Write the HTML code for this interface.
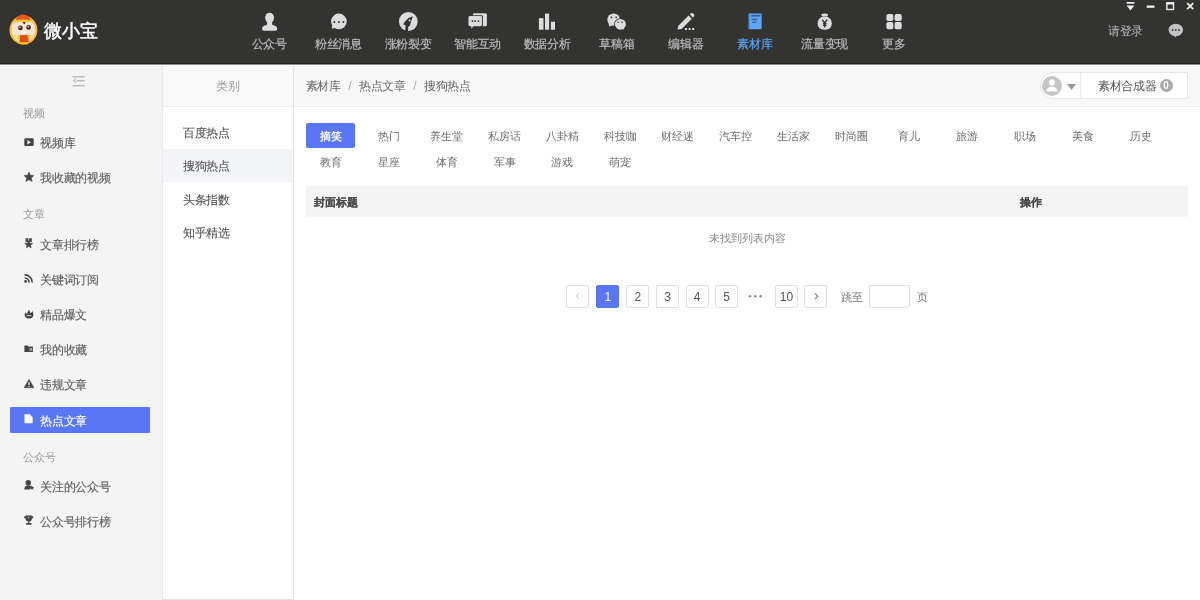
<!DOCTYPE html>
<html><head><meta charset="utf-8">
<style>
*{margin:0;padding:0;box-sizing:border-box}
html,body{width:1200px;height:600px;overflow:hidden;background:#fff;font-family:"Liberation Sans",sans-serif;font-size:12px;color:#555}
.a{position:absolute}
#hdr{left:0;top:0;width:1200px;height:64px;background:#333332;border-bottom:1px solid #222}
.nt{line-height:12px;font-size:12px;text-align:center;letter-spacing:-0.3px;white-space:nowrap;-webkit-text-stroke:0.2px currentColor}
.tg{width:60px;text-align:center;font-size:11px;line-height:11px;white-space:nowrap}
#side{left:0;top:66px;width:162px;height:534px;background:#f4f4f4}
.sl{position:absolute;left:23px;font-size:11px;line-height:11px;color:#999}
.si{position:absolute;left:40px;font-size:12px;line-height:12px;color:#606060;letter-spacing:-0.2px;-webkit-text-stroke:0.15px currentColor}
.ic{position:absolute;left:24px}
#cat{left:162px;top:66px;width:132px;height:534px;background:#fff;border-left:1px solid #e8e8e8;border-right:1px solid #e4e4e4;border-bottom:1px solid #e4e4e4}
#cathd{left:0;top:0;width:130px;height:41px;background:#f9f9f9;border-bottom:1px solid #ececec}
.ci{position:absolute;left:20px;font-size:12px;line-height:12px;color:#555;letter-spacing:-0.3px;-webkit-text-stroke:0.1px currentColor}
#bc{left:294px;top:66px;width:906px;height:41px;background:#f8f8f8;border-bottom:1px solid #ececec}
.tag{position:absolute;width:49px;height:24px;line-height:24px;text-align:center;font-size:11px;color:#666}
.tag.on{background:#5876f5;color:#fff;border-radius:2px}
.pg{position:absolute;top:285px;width:23px;height:23px;border:1px solid #e0e0e0;border-radius:2px;text-align:center;line-height:22px;font-size:12px;color:#555;background:#fff}
.pg.on{background:#5876f5;border-color:#5876f5;color:#fff}
</style></head><body><div id="wrap" style="will-change:transform;position:absolute;left:0;top:0;width:1200px;height:600px;overflow:hidden">

<!-- HEADER -->
<div id="hdr" class="a">
  <!-- logo -->
  <svg class="a" style="left:6px;top:12px" width="36" height="36" viewBox="0 0 36 36">
    <ellipse cx="17.4" cy="18" rx="14.8" ry="15.4" fill="#3a2a10"/>
    <ellipse cx="17.4" cy="18" rx="14" ry="14.6" fill="#f0bf3a"/>
    <ellipse cx="17.4" cy="18.4" rx="12" ry="12.6" fill="#f7dc96"/>
    <path d="M9.5 9.5 Q10.5 2.6 17 2.6 Q23.8 2.6 25 9.2 Z" fill="#e8561a"/>
    <path d="M8.6 8.6 Q17 6.6 25.6 8.4 L25.2 10.6 Q17 9 8.8 10.8 Z" fill="#f5c43a"/>
    <path d="M6 13 Q7 9.5 12 10.5 L24 10 Q29 10.5 28.6 15 L29 21 Q27 23.5 23 22.8 L12 23 Q6.5 23 6.2 19.5 Z" fill="#f6e3d2"/>
    <path d="M16.4 10.4 Q18 9.6 19.8 10.8 L18.4 12.2 Z" fill="#3a2010"/>
    <circle cx="14.4" cy="15.9" r="2.3" fill="#5a1a28"/>
    <circle cx="22.6" cy="15.4" r="2.3" fill="#5a1a28"/>
    <circle cx="14" cy="15.3" r="0.7" fill="#fff"/>
    <circle cx="22.2" cy="14.8" r="0.7" fill="#fff"/>
    <path d="M16.6 19.6 L20 19.6 L19.4 21.6 L17.2 21.6 Z" fill="#fff"/>
    <path d="M13.6 23.2 L22.4 23 L22.6 30.2 L13.8 30.4 Z" fill="#e64a12"/>
    <path d="M14.6 30.2 L22.2 30 L21.8 32.6 L15 32.6 Z" fill="#f3c21c"/>
    <circle cx="12.6" cy="25.8" r="1.6" fill="#c8d83a"/>
    <circle cx="23" cy="24" r="1.6" fill="#c8d83a"/>
  </svg>
  <div class="a" style="left:44px;top:21.5px;font-size:18px;line-height:18px;color:#fff;-webkit-text-stroke:0.5px #fff">微小宝</div>

  <svg class="a" style="left:255px;top:8px" width="30" height="26" viewBox="0 0 30 26"><ellipse cx="14.6" cy="9.8" rx="4.5" ry="5.1" fill="#dcdcdc"/><path d="M12.3 13.5 L16.9 13.5 L17.4 16.9 Q21.9 17.6 22.3 20.4 Q22.5 22.8 20.3 22.8 L9 22.8 Q6.8 22.8 7 20.4 Q7.4 17.6 11.8 16.9 Z" fill="#dcdcdc"/></svg>
<div class="a nt" style="left:229.2px;top:38px;width:80px;color:#bababa">公众号</div>
<svg class="a" style="left:325px;top:8px" width="30" height="26" viewBox="0 0 30 26"><circle cx="13.9" cy="13.4" r="7.8" fill="#dcdcdc"/><path d="M7.5 15.5 L6.8 20.8 L12 19.5 Z" fill="#dcdcdc"/><circle cx="9.4" cy="13.9" r="1" fill="#323232"/><circle cx="13.9" cy="13.9" r="1" fill="#323232"/><circle cx="18.4" cy="13.9" r="1" fill="#323232"/></svg>
<div class="a nt" style="left:298.3px;top:38px;width:80px;color:#bababa">粉丝消息</div>
<svg class="a" style="left:393px;top:8px" width="30" height="26" viewBox="0 0 30 26"><circle cx="15.3" cy="13.5" r="9.4" fill="#dcdcdc"/><path d="M19.8 8.2 L15.4 10 L11.2 14.6 L10.2 16.4 L12.6 17.2 L12.2 23.6 L15 23.6 L15.2 19 L17 17.6 L18.2 13.2 Z" fill="#323232"/><circle cx="16.6" cy="12.4" r="1" fill="#dcdcdc"/></svg>
<div class="a nt" style="left:368.0px;top:38px;width:80px;color:#bababa">涨粉裂变</div>
<svg class="a" style="left:462px;top:8px" width="30" height="26" viewBox="0 0 30 26"><rect x="10.8" y="5.2" width="14.1" height="13" rx="1.5" fill="#dcdcdc"/><path d="M8 7.3 L19.6 7.3 Q20.9 7.3 20.9 8.6 L20.9 17.2 Q20.9 19.2 19 19.2 L11.5 19.2 L8.8 21.6 L8.8 19.2 L7.8 19.2 Q5.8 19.2 5.8 17.4 L5.8 9.2 Q5.8 7.3 8 7.3 Z" fill="#323232"/><path d="M8 8 L18.8 8 Q19.9 8 19.9 9.2 L19.9 16.6 Q19.9 18.2 18.4 18.2 L11.3 18.2 L9.3 20.8 L9.3 18.2 L8 18.2 Q6.5 18.2 6.5 16.6 L6.5 9.4 Q6.5 8 8 8 Z" fill="#dcdcdc"/><rect x="9.7" y="12.3" width="1.5" height="1.6" fill="#323232"/><rect x="12.5" y="12.3" width="1.5" height="1.6" fill="#323232"/><rect x="15.7" y="12.3" width="1.5" height="1.6" fill="#323232"/></svg>
<div class="a nt" style="left:437.6px;top:38px;width:80px;color:#bababa">智能互动</div>
<svg class="a" style="left:532px;top:8px" width="30" height="26" viewBox="0 0 30 26"><rect x="6.9" y="10.2" width="4.6" height="11.5" fill="#dcdcdc"/><rect x="13" y="5.6" width="4.1" height="16.1" fill="#dcdcdc"/><rect x="18.9" y="13.7" width="4.1" height="8" fill="#dcdcdc"/></svg>
<div class="a nt" style="left:507.0px;top:38px;width:80px;color:#bababa">数据分析</div>
<svg class="a" style="left:601px;top:8px" width="30" height="26" viewBox="0 0 30 26"><ellipse cx="12.7" cy="11.6" rx="6.4" ry="6.2" fill="#dcdcdc"/><path d="M7.5 15 L8.3 18.8 L11.5 17 Z" fill="#dcdcdc"/><ellipse cx="19.4" cy="16.35" rx="6.3" ry="6.1" fill="#323232"/><ellipse cx="19.4" cy="16.35" rx="5.5" ry="5.3" fill="#dcdcdc"/><path d="M21 20.5 L23 21.8 L22.8 19 Z" fill="#dcdcdc"/><circle cx="10.4" cy="9.3" r="0.9" fill="#323232"/><circle cx="15.2" cy="9.3" r="0.9" fill="#323232"/><circle cx="17.1" cy="14.3" r="0.8" fill="#323232"/><circle cx="21" cy="14.3" r="0.8" fill="#323232"/></svg>
<div class="a nt" style="left:576.8px;top:38px;width:80px;color:#bababa">草稿箱</div>
<svg class="a" style="left:671px;top:8px" width="30" height="26" viewBox="0 0 30 26"><path d="M6.4 21.6 L7.4 17.8 L17.6 7.6 L20.8 10.8 L10.6 21 Z" fill="#dcdcdc"/><path d="M18.8 6.4 L19.6 5.6 Q21 4.2 22.4 5.6 L22.8 6 Q24.2 7.4 22.8 8.8 L22 9.6 Z" fill="#dcdcdc"/><rect x="14" y="20" width="2" height="2" fill="#dcdcdc"/><rect x="17.6" y="20" width="2" height="2" fill="#dcdcdc"/><rect x="21.1" y="20" width="2" height="2" fill="#dcdcdc"/></svg>
<div class="a nt" style="left:645.8px;top:38px;width:80px;color:#bababa">编辑器</div>
<svg class="a" style="left:740px;top:8px" width="30" height="26" viewBox="0 0 30 26"><rect x="8.7" y="5.6" width="13" height="15.6" rx="0.8" fill="#5ea8f6"/><rect x="11.2" y="7" width="9.2" height="1.6" fill="#2c5c9c"/><rect x="11.7" y="10.8" width="5.6" height="1.4" fill="#2c5c9c"/><rect x="12.2" y="13.6" width="4" height="1.3" fill="#2c5c9c"/><rect x="8.7" y="5.6" width="1.2" height="15.6" fill="#4a90e0"/></svg>
<div class="a nt" style="left:715.0px;top:38px;width:80px;color:#5aa2f0">素材库</div>
<svg class="a" style="left:810px;top:8px" width="30" height="26" viewBox="0 0 30 26"><path d="M11.6 6 Q14.7 5.2 17.8 6 Q18.6 7.2 17.2 8.2 L12.2 8.2 Q10.8 7.2 11.6 6 Z" fill="#dcdcdc"/><path d="M12.6 8.6 L16.8 8.6 Q21.8 10.6 21.8 15.6 Q21.8 21.8 14.7 21.8 Q7.6 21.8 7.6 15.6 Q7.6 10.6 12.6 8.6 Z" fill="#dcdcdc"/><path d="M12.2 11.6 L14.7 15 L17.2 11.6 M14.7 15 L14.7 19.4 M12.9 15.6 L16.5 15.6 M12.9 17.4 L16.5 17.4" stroke="#323232" stroke-width="1.4" fill="none"/></svg>
<div class="a nt" style="left:784.6px;top:38px;width:80px;color:#bababa">流量变现</div>
<svg class="a" style="left:879px;top:8px" width="30" height="26" viewBox="0 0 30 26"><rect x="7.4" y="6.1" width="6.9" height="6.9" rx="1.8" fill="#dcdcdc"/><rect x="15.6" y="6.1" width="7.1" height="6.9" rx="1.8" fill="#dcdcdc"/><rect x="7.4" y="13.9" width="6.9" height="7.4" rx="1.8" fill="#dcdcdc"/><rect x="15.6" y="13.9" width="7.1" height="7.4" rx="1.8" fill="#dcdcdc"/></svg>
<div class="a nt" style="left:853.8px;top:38px;width:80px;color:#bababa">更多</div>

  <!-- window controls -->
  <svg class="a" style="left:1126px;top:2px" width="10" height="10" viewBox="0 0 10 10"><rect x="0.6" y="0" width="7.8" height="1.7" fill="#eee"/><path d="M0.6 3.6 L8.4 3.6 L4.5 8.6 Z" fill="#eee"/></svg>
  <svg class="a" style="left:1146px;top:5px" width="10" height="4" viewBox="0 0 10 4"><rect x="0.7" y="0.5" width="7.8" height="2.3" fill="#eee"/></svg>
  <svg class="a" style="left:1166px;top:2px" width="9" height="9" viewBox="0 0 9 9"><rect x="0.9" y="0.9" width="6.6" height="6.6" fill="none" stroke="#eee" stroke-width="1.4"/><rect x="0.3" y="0.3" width="7.8" height="2.2" fill="#eee"/></svg>
  <svg class="a" style="left:1186px;top:2px" width="9" height="9" viewBox="0 0 9 9"><path d="M1.2 1.2 L7.2 7.2 M7.2 1.2 L1.2 7.2" stroke="#eee" stroke-width="1.8"/></svg>

  <div class="a" style="left:1108px;top:25px;font-size:12px;line-height:12px;color:#bbb;letter-spacing:-0.3px">请登录</div>
  <svg class="a" style="left:1168px;top:23px" width="16" height="16" viewBox="0 0 16 16">
    <ellipse cx="7.8" cy="7" rx="7.2" ry="6.2" fill="#c4c4c4"/>
    <path d="M5 11 L7.5 14.5 L9 11 Z" fill="#c4c4c4"/>
    <circle cx="4.6" cy="7" r="0.9" fill="#333"/><circle cx="7.8" cy="7" r="0.9" fill="#333"/><circle cx="11" cy="7" r="0.9" fill="#333"/>
  </svg>
</div>

<div id="hline" class="a" style="left:0;top:64px;width:1200px;height:1px;background:#8a8a8a"></div>
<!-- SIDEBAR -->
<div id="side" class="a"></div>
<svg class="a" style="left:72px;top:75px" width="14" height="13" viewBox="0 0 14 13"><path d="M0.4 1.8 H12.7 M4.6 5.8 H12.7 M0.4 10.75 H12.7" stroke="#bdbdbd" stroke-width="1.4"/><path d="M3.8 4 L1.6 5.8 L3.8 7.6" stroke="#bdbdbd" stroke-width="1.3" fill="none"/></svg>
<div class="sl" style="top:108.3px">视频</div>
<div class="sl" style="top:209.3px">文章</div>
<div class="sl" style="top:451.7px">公众号</div>
<div class="a" style="left:10px;top:406.5px;width:140px;height:26.5px;background:#5876f5;border-radius:1px"></div>
<div class="si" style="top:137.3px;color:#606060">视频库</div>
<div class="si" style="top:172.4px;color:#606060">我收藏的视频</div>
<div class="si" style="top:238.5px;color:#606060">文章排行榜</div>
<div class="si" style="top:273.5px;color:#606060">关键词订阅</div>
<div class="si" style="top:308.5px;color:#606060">精品爆文</div>
<div class="si" style="top:343.5px;color:#606060">我的收藏</div>
<div class="si" style="top:379.2px;color:#606060">违规文章</div>
<div class="si" style="top:414.5px;color:#fff">热点文章</div>
<div class="si" style="top:481.2px;color:#606060">关注的公众号</div>
<div class="si" style="top:515.7px;color:#606060">公众号排行榜</div>
<svg class="a" style="left:23.5px;top:137.5px" width="11" height="9" viewBox="0 0 11 9"><rect x="0.3" y="0.3" width="9.4" height="7.8" rx="1.3" fill="#444"/><path d="M3.4 2 L7 4.2 L3.4 6.4 Z" fill="#f4f4f4"/></svg>
<svg class="a" style="left:23.5px;top:171.5px" width="11" height="11" viewBox="0 0 11 11"><path d="M5 0 L6.5 3.3 L10 3.6 L7.3 6 L8.2 9.6 L5 7.7 L1.8 9.6 L2.7 6 L0 3.6 L3.5 3.3 Z" fill="#444" stroke="#444" stroke-width="0.5" stroke-linejoin="round"/></svg>
<svg class="a" style="left:23.5px;top:238px" width="11" height="11" viewBox="0 0 11 11"><path d="M1.6 0.2 H4.3 V4 H1.6 Z M5.1 0.2 H7.8 V4 H5.1 Z" fill="#444"/><path d="M4.7 2.6 L5.9 5.1 L8.8 5.4 L6.6 7.2 L7.3 10 L4.7 8.5 L2.1 10 L2.8 7.2 L0.6 5.4 L3.5 5.1 Z" fill="#444" stroke="#444" stroke-width="0.4" stroke-linejoin="round"/></svg>
<svg class="a" style="left:23.5px;top:273.5px" width="11" height="11" viewBox="0 0 11 11"><circle cx="1.6" cy="7.4" r="1.4" fill="#444"/><path d="M0.6 4 A4.2 4.2 0 0 1 5 8.6" stroke="#444" stroke-width="1.6" fill="none"/><path d="M0.6 0.9 A7.4 7.4 0 0 1 8.2 8.6" stroke="#444" stroke-width="1.6" fill="none"/></svg>
<svg class="a" style="left:23.5px;top:309px" width="11" height="11" viewBox="0 0 11 11"><path d="M1 3.6 L3 5 L4.9 0.4 L6.8 4.6 L8.6 2 L9.4 5.2 Q9.4 9.6 5 9.6 Q0.7 9.6 0.7 5.6 Z" fill="#444"/><path d="M2.8 6.6 H7.2" stroke="#f4f4f4" stroke-width="0.9"/></svg>
<svg class="a" style="left:23.5px;top:344.5px" width="11" height="8" viewBox="0 0 11 8"><path d="M0.4 0.6 H3.6 L4.6 1.6 H9 V7 H0.4 Z" fill="#444"/><path d="M5.4 2.8 L8.4 6 M8.4 2.8 L5.4 6" stroke="#f4f4f4" stroke-width="0.8"/></svg>
<svg class="a" style="left:23.5px;top:379px" width="11" height="10" viewBox="0 0 11 10"><path d="M5 0.2 L10 8.8 H0 Z" fill="#444" stroke="#444" stroke-width="0.4" stroke-linejoin="round"/><rect x="4.4" y="3" width="1.2" height="3" fill="#f4f4f4"/><rect x="4.4" y="6.8" width="1.2" height="1.1" fill="#f4f4f4"/></svg>
<svg class="a" style="left:24px;top:414px" width="10" height="10" viewBox="0 0 10 10"><path d="M0.5 0.3 H5.6 L8.6 3.3 V9.2 H0.5 Z" fill="#fff"/><path d="M5.6 0.3 V3.3 H8.6" fill="#dfe6fd"/></svg>
<svg class="a" style="left:23.5px;top:480px" width="11" height="10" viewBox="0 0 11 10"><circle cx="4.3" cy="2.8" r="2.7" fill="#444"/><path d="M0.2 9.4 Q0.6 5.2 4.3 5.2 Q6.3 5.2 7.2 6.3 L5.8 9.4 Z" fill="#444"/><path d="M7.8 5.2 L8.6 6.9 L10.4 7 L9 8.1 L9.5 9.8 L7.8 8.9 L6.2 9.8 L6.7 8.1 L5.3 7 L7.1 6.9 Z" fill="#444"/></svg>
<svg class="a" style="left:23.5px;top:515px" width="11" height="11" viewBox="0 0 11 11"><path d="M1.6 0.5 H7.9 V3.8 Q7.9 6.6 4.8 6.6 Q1.6 6.6 1.6 3.8 Z" fill="#444"/><path d="M0.2 1.2 H1.7 V3.3 H0.2 Z M7.8 1.2 H9.3 V3.3 H7.8 Z" fill="#444"/><rect x="4.1" y="6.4" width="1.4" height="1.8" fill="#444"/><rect x="2.1" y="8" width="5.4" height="1.7" fill="#444"/><path d="M4.75 1.6 L5.5 3.2 L4 3.2 Z" fill="#f4f4f4"/></svg>

<!-- CATEGORY COLUMN -->
<div id="cat" class="a">
  <div id="cathd" class="a"><div class="a" style="left:0;width:130px;top:14px;text-align:center;font-size:12px;line-height:12px;color:#999">类别</div></div>
  <div class="a" style="left:0;top:83px;width:130px;height:32.5px;background:#f4f5f9"></div>
  <div class="ci" style="top:61px">百度热点</div>
  <div class="ci" style="top:94px">搜狗热点</div>
  <div class="ci" style="top:127.5px">头条指数</div>
  <div class="ci" style="top:161px">知乎精选</div>
</div>

<!-- BREADCRUMB -->
<div id="bc" class="a">
  <div class="a" style="left:11.5px;top:14px;font-size:12px;line-height:12px;color:#666;letter-spacing:-0.3px;white-space:nowrap">素材库<span style="color:#aaa;padding:0 7.6px">/</span>热点文章<span style="color:#aaa;padding:0 7.6px">/</span>搜狗热点</div>
</div>

<div class="a" style="left:1040px;top:72px;width:147.5px;height:27px;background:#fff;border:1px solid #e6e6e6;border-radius:13px 1px 1px 13px"></div>
<div class="a" style="left:1080px;top:73px;width:1px;height:25px;background:#ececec"></div>
<svg class="a" style="left:1041px;top:75px" width="40" height="22" viewBox="0 0 40 22"><circle cx="11" cy="11" r="10" fill="#c6c6c6"/><ellipse cx="10.9" cy="7.4" rx="2.8" ry="3.2" fill="#fff"/><path d="M5.4 16.4 Q5.8 11.8 10.9 11.8 Q16 11.8 16.4 16.4 Z" fill="#fff"/><path d="M26 9 L35 9 L30.5 15 Z" fill="#9a9a9a"/></svg>
<div class="a" style="left:1098px;top:80px;font-size:12px;line-height:12px;color:#555;letter-spacing:-0.3px">素材合成器</div>
<div class="a" style="left:1159.5px;top:78.7px;width:13px;height:13px;border-radius:50%;background:#a8a8a8;color:#fff;font-size:10px;line-height:13px;text-align:center;font-weight:bold">0</div>
<div class="a" style="left:306.3px;top:123.3px;width:49.2px;height:24.5px;background:#5876f5;border-radius:2px"></div>
<div class="a tg" style="left:301.0px;top:131.0px;color:#fff;-webkit-text-stroke:0.3px #fff">摘笑</div>
<div class="a tg" style="left:358.8px;top:131.0px;color:#6e6e6e">热门</div>
<div class="a tg" style="left:416.6px;top:131.0px;color:#6e6e6e">养生堂</div>
<div class="a tg" style="left:474.5px;top:131.0px;color:#6e6e6e">私房话</div>
<div class="a tg" style="left:532.3px;top:131.0px;color:#6e6e6e">八卦精</div>
<div class="a tg" style="left:590.1px;top:131.0px;color:#6e6e6e">科技咖</div>
<div class="a tg" style="left:647.9px;top:131.0px;color:#6e6e6e">财经迷</div>
<div class="a tg" style="left:705.7px;top:131.0px;color:#6e6e6e">汽车控</div>
<div class="a tg" style="left:763.6px;top:131.0px;color:#6e6e6e">生活家</div>
<div class="a tg" style="left:821.4px;top:131.0px;color:#6e6e6e">时尚圈</div>
<div class="a tg" style="left:879.2px;top:131.0px;color:#6e6e6e">育儿</div>
<div class="a tg" style="left:937.0px;top:131.0px;color:#6e6e6e">旅游</div>
<div class="a tg" style="left:994.8px;top:131.0px;color:#6e6e6e">职场</div>
<div class="a tg" style="left:1052.7px;top:131.0px;color:#6e6e6e">美食</div>
<div class="a tg" style="left:1110.5px;top:131.0px;color:#6e6e6e">历史</div>
<div class="a tg" style="left:301.0px;top:156.6px;color:#6e6e6e">教育</div>
<div class="a tg" style="left:358.8px;top:156.6px;color:#6e6e6e">星座</div>
<div class="a tg" style="left:416.6px;top:156.6px;color:#6e6e6e">体育</div>
<div class="a tg" style="left:474.5px;top:156.6px;color:#6e6e6e">军事</div>
<div class="a tg" style="left:532.3px;top:156.6px;color:#6e6e6e">游戏</div>
<div class="a tg" style="left:590.1px;top:156.6px;color:#6e6e6e">萌宠</div>
<div class="a" style="left:306px;top:186px;width:881.5px;height:31px;background:#f4f4f4;border-bottom:1px solid #f7f7f7"></div>
<div class="a" style="left:314px;top:196.5px;font-size:11px;line-height:11px;font-weight:bold;color:#4a4a4a;-webkit-text-stroke:0.1px #4a4a4a">封面标题</div>
<div class="a" style="left:1020px;top:196.5px;font-size:11px;line-height:11px;font-weight:bold;color:#4a4a4a;-webkit-text-stroke:0.1px #4a4a4a">操作</div>
<div class="a" style="left:709px;top:233px;font-size:11px;line-height:11px;color:#888">未找到列表内容</div>
<div class="pg" style="left:566.4px"></div>
<div class="pg on" style="left:596.3px">1</div>
<div class="pg" style="left:626.3px">2</div>
<div class="pg" style="left:656px">3</div>
<div class="pg" style="left:685.5px">4</div>
<div class="pg" style="left:715px">5</div>
<div class="pg" style="left:775px">10</div>
<div class="pg" style="left:804.3px"></div>
<svg class="a" style="left:574px;top:290px" width="8" height="12" viewBox="0 0 8 12"><path d="M5 3.2 L2.4 6 L5 8.8" stroke="#d8d8d8" stroke-width="1.2" fill="none"/></svg>
<svg class="a" style="left:812px;top:290px" width="8" height="12" viewBox="0 0 8 12"><path d="M3 3.4 L5.8 6.2 L3 9" stroke="#8a8a8a" stroke-width="1.3" fill="none"/></svg>
<svg class="a" style="left:746px;top:293px" width="18" height="6" viewBox="0 0 18 6"><circle cx="4" cy="3.3" r="1.3" fill="#8c8c8c"/><circle cx="9.3" cy="3.3" r="1.3" fill="#8c8c8c"/><circle cx="14.7" cy="3.3" r="1.3" fill="#8c8c8c"/></svg>
<div class="a" style="left:841px;top:291.5px;font-size:11px;line-height:11px;color:#777">跳至</div>
<div class="a" style="left:869px;top:285.3px;width:41px;height:22.5px;border:1px solid #ddd;border-radius:2px;background:#fff"></div>
<div class="a" style="left:916.5px;top:291.5px;font-size:11px;line-height:11px;color:#777">页</div>

</div></body></html>
